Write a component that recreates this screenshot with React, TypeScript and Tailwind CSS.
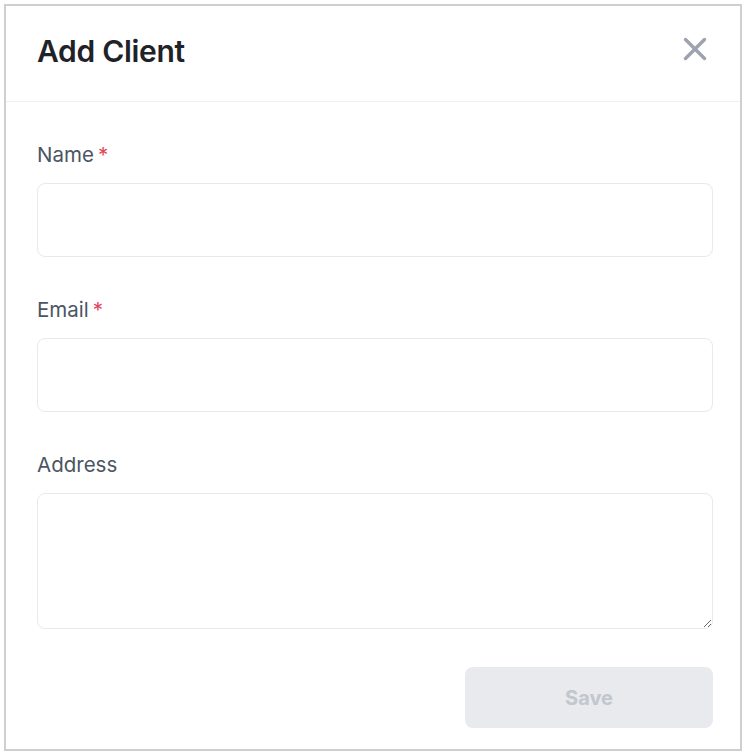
import React, { useState } from 'react';

const Field: React.FC<{ label: string; required?: boolean; children: React.ReactNode }> = ({ label, required, children }) => (
  <div className="flex flex-col">
    <label className="text-[20.5px] leading-[28px] text-[#4b5563] mb-[14px]">
      {label}
      {required && <span className="text-[#e0475a] ml-1">*</span>}
    </label>
    {children}
  </div>
);

const App: React.FC = () => {
  const [name, setName] = useState('');
  const [email, setEmail] = useState('');
  const [address, setAddress] = useState('');

  const canSave = name.trim() !== '' && email.trim() !== '';

  return (
    <div className="w-[744px] h-[756px] bg-white pt-1 pl-1" style={{ fontFamily: 'Inter, "Noto Sans", sans-serif' }}>
      <div className="w-[738px] h-[747px] border-2 border-[#cfcfcf] bg-white flex flex-col">
        {/* Header */}
        <header className="h-[96px] shrink-0 flex items-start justify-between pl-[31px] pr-[32px] pt-[25px] border-b border-[#f0f0f2]">
          <h2 className="text-[30px] leading-[40px] font-semibold text-[#1f2329] tracking-[-0.3px]">Add Client</h2>
          <button className="mt-[5px] w-[26px] h-[26px] flex items-center justify-center text-[#9ca3af]" aria-label="Close">
            <svg width="24" height="24" viewBox="0 0 24 24" fill="none" stroke="currentColor" strokeWidth="3.4" strokeLinecap="round">
              <line x1="2.5" y1="2.5" x2="21.5" y2="21.5" />
              <line x1="21.5" y1="2.5" x2="2.5" y2="21.5" />
            </svg>
          </button>
        </header>

        {/* Body */}
        <div className="flex flex-col gap-[39px] pl-[31px] pr-[27px] pt-[39px]">
          <Field label="Name" required>
            <input
              value={name}
              onChange={(e) => setName(e.target.value)}
              className="h-[74px] w-full rounded-lg border border-[#e8e9ec] px-4 text-[20px] outline-none"
            />
          </Field>
          <Field label="Email" required>
            <input
              value={email}
              onChange={(e) => setEmail(e.target.value)}
              className="h-[74px] w-full rounded-lg border border-[#e8e9ec] px-4 text-[20px] outline-none"
            />
          </Field>
          <Field label="Address">
            <textarea
              value={address}
              onChange={(e) => setAddress(e.target.value)}
              className="h-[136px] w-full rounded-lg border border-[#e8e9ec] px-4 py-3 text-[20px] outline-none"
            />
          </Field>
        </div>

        <div className="flex justify-end pr-[27px] pt-[38px]">
          <button
            disabled={!canSave}
            className="w-[248px] h-[61px] rounded-lg bg-[#e9eaee] text-[#c2c6cd] text-[20px] font-bold"
          >
            Save
          </button>
        </div>
      </div>
    </div>
  );
};

export default App;
